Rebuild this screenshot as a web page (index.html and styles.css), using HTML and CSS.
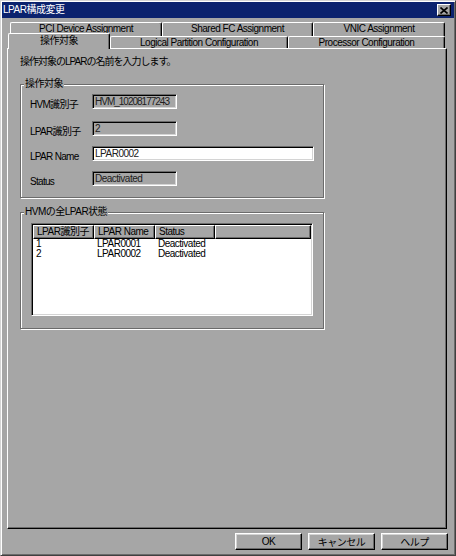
FILE: index.html
```html
<!DOCTYPE html>
<html lang="ja">
<head>
    <meta charset="UTF-8">
    <title>LPAR構成変更</title>
    <link rel="stylesheet" href="styles.css">
</head>
<body>
    <div class="window">
        <!-- タイトルバー -->
        <div class="titlebar">
            <span class="title">LPAR構成変更</span>
            <span class="close-btn">
                <svg width="8" height="7" viewBox="0 0 8 7">
                    <path d="M0.5 0.5 L7.5 6.5 M7.5 0.5 L0.5 6.5" stroke="#000" stroke-width="1.6" fill="none"/>
                </svg>
            </span>
        </div>

        <!-- タブ -->
        <div class="tab-row back">
            <div class="tab tab-pci">PCI Device Assignment</div>
            <div class="tab tab-fc">Shared FC Assignment</div>
            <div class="tab tab-vnic">VNIC Assignment</div>
        </div>
        <div class="tab-row front">
            <div class="tab tab-op selected">操作対象</div>
            <div class="tab tab-lpc">Logical Partition Configuration</div>
            <div class="tab tab-proc">Processor Configuration</div>
        </div>

        <!-- タブの中身 -->
        <div class="panel">
            <p class="intro">操作対象のLPARの名前を入力します。</p>

            <div class="group group-target">
                <div class="group-title">操作対象</div>
                <div class="form-grid">
                    <span class="label">HVM識別子</span>
                    <div class="field field-short field-id">HVM_10208177243</div>
                    <span class="label">LPAR識別子</span>
                    <div class="field field-short">2</div>
                    <span class="label">LPAR Name</span>
                    <div class="field field-long editable">LPAR0002</div>
                    <span class="label">Status</span>
                    <div class="field field-short">Deactivated</div>
                </div>
            </div>

            <div class="group group-list">
                <div class="group-title">HVMの全LPAR状態</div>
                <div class="listview">
                    <div class="list-header">
                        <div class="col-head">LPAR識別子</div>
                        <div class="col-head">LPAR Name</div>
                        <div class="col-head">Status</div>
                        <div class="col-head col-rest"></div>
                    </div>
                    <div class="list-row">
                        <span>1</span><span>LPAR0001</span><span>Deactivated</span>
                    </div>
                    <div class="list-row">
                        <span>2</span><span>LPAR0002</span><span>Deactivated</span>
                    </div>
                </div>
            </div>
        </div>

        <!-- ボタン -->
        <div class="buttons">
            <button class="btn">OK</button>
            <button class="btn">キャンセル</button>
            <button class="btn">ヘルプ</button>
        </div>
    </div>
</body>
</html>
```

FILE: styles.css
```css
* {
    box-sizing: border-box;
}

body {
    margin: 0;
    background-color: #a6a6a6;
    font-family: "Liberation Sans", "Noto Sans CJK JP", sans-serif;
    font-size: 10px;
    letter-spacing: -0.5px;
    color: #000;
}

.window {
    width: 456px;
    height: 556px;
    border: 1px solid;
    border-color: #d4d4d4 #404040 #404040 #d4d4d4;
    padding: 1px;
    box-shadow: inset 1px 1px 0 #fff, inset -1px -1px 0 #6b6b6b;
    background-color: #a6a6a6;
}

.titlebar {
    height: 16px;
    background-color: #0b226e;
    display: flex;
    align-items: center;
    justify-content: space-between;
    padding: 0 3px 0 1px;
}

.title {
    color: #fff;
    line-height: 16px;
}

.close-btn {
    width: 14px;
    height: 12px;
    display: flex;
    align-items: center;
    justify-content: center;
    background-color: #a6a6a6;
    border: 1px solid;
    border-color: #fff #000 #000 #fff;
    box-shadow: inset -1px -1px 0 #6b6b6b;
}

/* タブ */
.tab-row {
    display: flex;
    margin-left: 8px;
}

.tab-row.back {
    margin-top: 4px;
    height: 14px;
}

.tab-row.front {
    height: 12px;
}

.tab {
    border-top: 1px solid #fff;
    border-left: 1px solid #fff;
    border-right: 1px solid #000;
    border-radius: 2px 2px 0 0;
    box-shadow: inset -1px 0 0 #6b6b6b;
    text-align: center;
    line-height: 12px;
    white-space: nowrap;
}

.tab-pci { width: 152px; }
.tab-fc { width: 151px; }
.tab-vnic { width: 132px; }
.tab-op { width: 100px; }
.tab-lpc { width: 178px; }
.tab-proc { width: 157px; }

.tab-row.front .tab {
    line-height: 11px;
}

.tab.selected {
    position: relative;
    z-index: 1;
    width: 102px;
    height: 16px;
    margin: -3px 0 -1px -2px;
    padding-top: 1px;
    background-color: #a6a6a6;
}

/* パネル */
.panel {
    margin-left: 5px;
    width: 440px;
    height: 481px;
    border: 1px solid;
    border-color: #fff #000 #000 #fff;
    box-shadow: inset -1px -1px 0 #6b6b6b;
    padding: 7px 0 0 12px;
}

.intro {
    margin: 0;
    line-height: 12px;
    letter-spacing: -1px;
}

.group {
    width: 304px;
    border: 1px solid #6b6b6b;
    box-shadow: inset 1px 1px 0 #fff, 1px 1px 0 #fff;
}

.group-target {
    margin-top: 16px;
    height: 114px;
}

.group-list {
    margin-top: 14px;
    height: 117px;
}

.group-title {
    width: fit-content;
    margin: -7px 0 0 3px;
    padding: 0 1px;
    line-height: 12px;
    background-color: #a6a6a6;
}

.form-grid {
    display: grid;
    grid-template-columns: 62px auto;
    grid-template-rows: 27px 25px 25px 15px;
    margin: 4px 0 0 9px;
}

.label {
    padding-top: 5px;
    line-height: 12px;
    letter-spacing: -0.7px;
}

.field {
    height: 15px;
    border: 1px solid;
    border-color: #6b6b6b #fff #fff #6b6b6b;
    box-shadow: inset 1px 1px 0 #000, inset -1px -1px 0 #d4d4d4;
    padding: 1px 0 0 2px;
    line-height: 12px;
    color: #202020;
    white-space: nowrap;
    overflow: hidden;
}

.field-short { width: 85px; }
.field-long { width: 222px; }

.field-id {
    letter-spacing: -1px;
}

.field.editable {
    background-color: #fff;
}

/* 一覧 */
.listview {
    margin: 5px 0 0 10px;
    width: 282px;
    height: 93px;
    background-color: #fff;
    border: 1px solid;
    border-color: #6b6b6b #fff #fff #6b6b6b;
    box-shadow: inset 1px 1px 0 #000, inset -1px -1px 0 #d4d4d4;
    padding: 1px 1px 0 1px;
}

.list-header {
    display: flex;
    height: 14px;
}

.col-head {
    width: 61px;
    background-color: #a6a6a6;
    border: 1px solid;
    border-color: #fff #000 #000 #fff;
    box-shadow: inset -1px -1px 0 #6b6b6b;
    padding-left: 3px;
    line-height: 11px;
}

.col-head:nth-child(3) { width: 60px; }
.col-head.col-rest { flex: 1; }

.list-row {
    display: grid;
    grid-template-columns: 61px 61px 60px;
    line-height: 10px;
}

.list-row:first-of-type {
    margin-top: 1px;
}

.list-row span {
    padding-left: 3px;
}

/* ボタン */
.buttons {
    display: flex;
    justify-content: flex-end;
    gap: 6px;
    margin-top: 4px;
    padding-right: 6px;
}

.btn {
    width: 67px;
    height: 17px;
    font-family: inherit;
    font-size: 10px;
    letter-spacing: -0.5px;
    color: #000;
    background-color: #a6a6a6;
    border: 1px solid;
    border-color: #fff #000 #000 #fff;
    box-shadow: inset -1px -1px 0 #6b6b6b, inset 1px 1px 0 #d4d4d4;
    padding: 0;
}
```
